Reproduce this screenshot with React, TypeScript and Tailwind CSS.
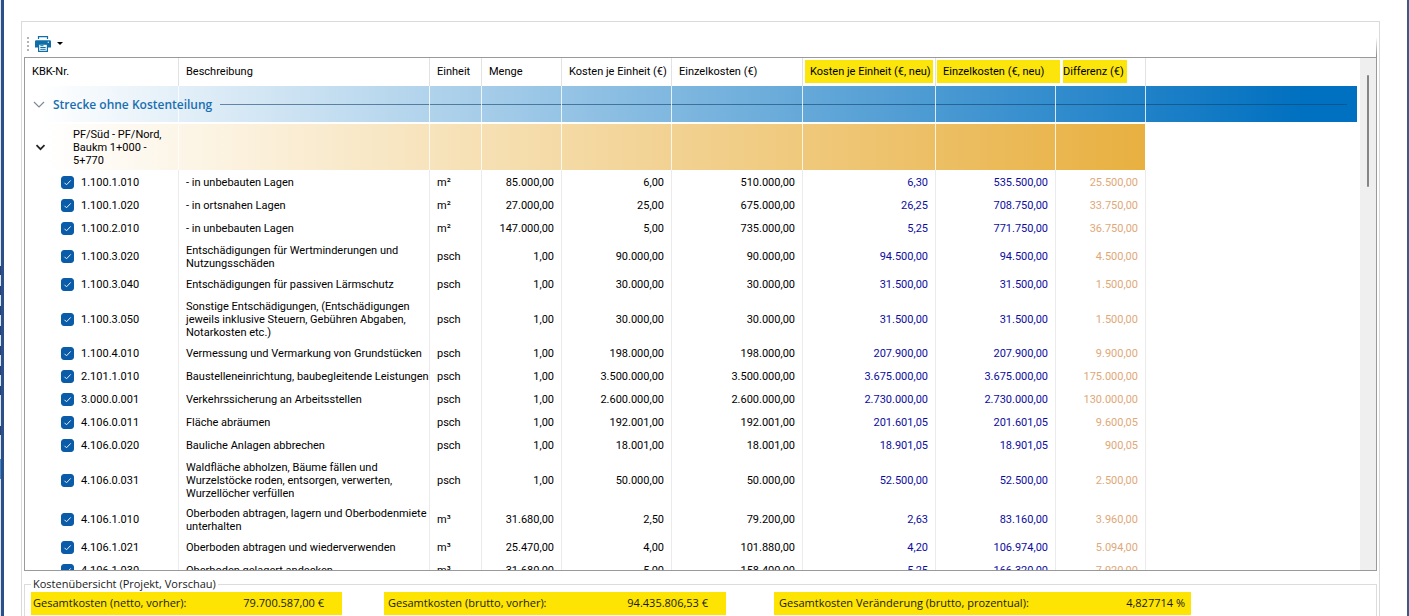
import React from 'react';

type Row = {
  nr: string;
  text: string;
  unit: string;
  amount: string;
  price: string;
  total: string;
  newPrice: string;
  newTotal: string;
  diff: string;
};

const rows: Row[] = [
  { nr: '1.100.1.010', text: '- in unbebauten Lagen', unit: 'm²', amount: '85.000,00', price: '6,00', total: '510.000,00', newPrice: '6,30', newTotal: '535.500,00', diff: '25.500,00' },
  { nr: '1.100.1.020', text: '- in ortsnahen Lagen', unit: 'm²', amount: '27.000,00', price: '25,00', total: '675.000,00', newPrice: '26,25', newTotal: '708.750,00', diff: '33.750,00' },
  { nr: '1.100.2.010', text: '- in unbebauten Lagen', unit: 'm²', amount: '147.000,00', price: '5,00', total: '735.000,00', newPrice: '5,25', newTotal: '771.750,00', diff: '36.750,00' },
  { nr: '1.100.3.020', text: 'Entschädigungen für Wertminderungen und\nNutzungsschäden', unit: 'psch', amount: '1,00', price: '90.000,00', total: '90.000,00', newPrice: '94.500,00', newTotal: '94.500,00', diff: '4.500,00' },
  { nr: '1.100.3.040', text: 'Entschädigungen für passiven Lärmschutz', unit: 'psch', amount: '1,00', price: '30.000,00', total: '30.000,00', newPrice: '31.500,00', newTotal: '31.500,00', diff: '1.500,00' },
  { nr: '1.100.3.050', text: 'Sonstige Entschädigungen, (Entschädigungen\njeweils inklusive Steuern, Gebühren Abgaben,\nNotarkosten etc.)', unit: 'psch', amount: '1,00', price: '30.000,00', total: '30.000,00', newPrice: '31.500,00', newTotal: '31.500,00', diff: '1.500,00' },
  { nr: '1.100.4.010', text: 'Vermessung und Vermarkung von Grundstücken', unit: 'psch', amount: '1,00', price: '198.000,00', total: '198.000,00', newPrice: '207.900,00', newTotal: '207.900,00', diff: '9.900,00' },
  { nr: '2.101.1.010', text: 'Baustelleneinrichtung, baubegleitende Leistungen', unit: 'psch', amount: '1,00', price: '3.500.000,00', total: '3.500.000,00', newPrice: '3.675.000,00', newTotal: '3.675.000,00', diff: '175.000,00' },
  { nr: '3.000.0.001', text: 'Verkehrssicherung an Arbeitsstellen', unit: 'psch', amount: '1,00', price: '2.600.000,00', total: '2.600.000,00', newPrice: '2.730.000,00', newTotal: '2.730.000,00', diff: '130.000,00' },
  { nr: '4.106.0.011', text: 'Fläche abräumen', unit: 'psch', amount: '1,00', price: '192.001,00', total: '192.001,00', newPrice: '201.601,05', newTotal: '201.601,05', diff: '9.600,05' },
  { nr: '4.106.0.020', text: 'Bauliche Anlagen abbrechen', unit: 'psch', amount: '1,00', price: '18.001,00', total: '18.001,00', newPrice: '18.901,05', newTotal: '18.901,05', diff: '900,05' },
  { nr: '4.106.0.031', text: 'Waldfläche abholzen, Bäume fällen und\nWurzelstöcke roden, entsorgen, verwerten,\nWurzellöcher verfüllen', unit: 'psch', amount: '1,00', price: '50.000,00', total: '50.000,00', newPrice: '52.500,00', newTotal: '52.500,00', diff: '2.500,00' },
  { nr: '4.106.1.010', text: 'Oberboden abtragen, lagern und Oberbodenmiete\nunterhalten', unit: 'm³', amount: '31.680,00', price: '2,50', total: '79.200,00', newPrice: '2,63', newTotal: '83.160,00', diff: '3.960,00' },
  { nr: '4.106.1.021', text: 'Oberboden abtragen und wiederverwenden', unit: 'm³', amount: '25.470,00', price: '4,00', total: '101.880,00', newPrice: '4,20', newTotal: '106.974,00', diff: '5.094,00' },
  { nr: '4.106.1.030', text: 'Oberboden gelagert andecken', unit: 'm³', amount: '31.680,00', price: '5,00', total: '158.400,00', newPrice: '5,25', newTotal: '166.320,00', diff: '7.920,00' },
];

const rowHeights = ['h-[23px]', 'h-[33px]', 'h-[46px]'];
const cell = 'border-r border-[#ebebeb] px-[7px] pt-[2px] pb-0';
const head = 'border-r border-[#e2e2e2] px-[7px] pt-0 pb-[2px] text-left font-normal whitespace-nowrap';

function PrinterIcon() {
  return (
    <svg viewBox="0 0 16 16" className="size-4" aria-hidden="true">
      <path d="M3.500 3V.6h9V3" fill="none" stroke="#0f6ea8" strokeWidth="1.200" />
      <path d="M1.200 4.200h13.600a1.200 1.200 0 0 1 1.200 1.200V11.500H0V5.400a1.200 1.200 0 0 1 1.200-1.200z" fill="#0f6ea8" />
      <path d="M3.600 8.200h8.800v7.200H3.600z" fill="#fff" stroke="#0f6ea8" strokeWidth="1.200" />
      <path d="M5.300 9.700h3.200M5.300 11.500h5.400M5.300 13.300h5.400" stroke="#0f6ea8" strokeWidth="1" />
      <path d="M12.700 5.800h1.300v1h-1.300z" fill="#fff" />
    </svg>
  );
}

function Toolbar() {
  return (
    <div className="flex h-[35px] items-center pl-[3px]">
      <div className="flex flex-col gap-[2px] pt-2">
        <span className="size-[2px] bg-[#b4b4b4]" />
        <span className="size-[2px] bg-[#b4b4b4]" />
        <span className="size-[2px] bg-[#b4b4b4]" />
        <span className="size-[2px] bg-[#b4b4b4]" />
      </div>
      <button type="button" aria-label="Drucken" className="flex items-center gap-[6px] pt-2 pl-[6px]">
        <PrinterIcon />
        <svg viewBox="0 0 6 3" className="h-[3px] w-[6px]" aria-hidden="true">
          <path d="M0 0h6L3 3z" fill="#000" />
        </svg>
      </button>
      <span className="ml-auto h-5 w-px self-end bg-linear-to-b from-white to-[#8a8a8a]" />
    </div>
  );
}

function CheckCell({ nr }: { nr: string }) {
  return (
    <label className="flex items-center gap-[7px] pl-[29px]">
      <span className="relative flex">
        <input type="checkbox" defaultChecked className="peer size-[13px] appearance-none rounded-[3px] border border-[#0a5ca8] bg-white checked:bg-[#0a5ca8]" />
        <svg viewBox="0 0 13 13" className="pointer-events-none absolute inset-0 hidden size-[13px] peer-checked:block" aria-hidden="true">
          <path d="M3.500 6.800l2 2 4.200-4.400" fill="none" stroke="#e6f1fa" strokeWidth="1" />
        </svg>
      </span>
      {nr}
    </label>
  );
}

function CostTable() {
  return (
    <table className="w-full table-fixed border-separate border-spacing-0 text-[11px] leading-[13px] text-black">
      <colgroup>
        <col className="w-[154px]" />
        <col className="w-[251px]" />
        <col className="w-[52px]" />
        <col className="w-[80px]" />
        <col className="w-[110px]" />
        <col className="w-[131px]" />
        <col className="w-[133px]" />
        <col className="w-[120px]" />
        <col className="w-[90px]" />
        <col />
      </colgroup>
      <thead>
        <tr className="h-7">
          <th className={head}>KBK-Nr.</th>
          <th className={head}>Beschreibung</th>
          <th className={head}>Einheit</th>
          <th className={head}>Menge</th>
          <th className={head}>Kosten je Einheit (€)</th>
          <th className={head}>Einzelkosten (€)</th>
          <th className="border-r border-[#e2e2e2] p-0 pr-[2px] pb-[2px] pl-[2px] text-left font-normal whitespace-nowrap">
            <span className="flex h-[23px] items-center bg-[#fbe50b] pl-[5px]">Kosten je Einheit (€, neu)</span>
          </th>
          <th className="p-0 pb-[2px] pl-px text-left font-normal whitespace-nowrap">
            <span className="mr-[-4px] flex h-[23px] items-center bg-[#fbe50b] pl-[6px]">Einzelkosten (€, neu)</span>
          </th>
          <th className="border-r border-[#e2e2e2] p-0 pr-[18px] pb-[2px] pl-[7px] text-left font-normal whitespace-nowrap">
            <span className="flex h-[23px] items-center bg-[#fbe50b]">Differenz (€)</span>
          </th>
          <th className="p-0" />
        </tr>
      </thead>
      <tbody>
        <tr>
          <td colSpan={10} className="p-0 pb-[2px]">
            <div className="relative flex h-9 items-center bg-[linear-gradient(to_right,#fff_15px,#0070c0_96%)] pr-[10px] pl-2">
              <div className="pointer-events-none absolute inset-0 grid grid-cols-[154px_251px_52px_80px_110px_131px_133px_120px_90px]">
                {rows.slice(0, 9).map((r) => (
                  <span key={r.nr} className="border-r border-white/80" />
                ))}
              </div>
              <button type="button" aria-expanded="true" className="relative flex items-center gap-[8px] font-['Open_Sans',sans-serif] text-[12px] font-semibold text-[#1a6fb0]">
                <svg viewBox="0 0 12 7" className="h-[7px] w-3" aria-hidden="true">
                  <path d="M1 1l5 5 5-5" fill="none" stroke="#7d8b98" strokeWidth="1.200" />
                </svg>
                Strecke ohne Kostenteilung
              </button>
              <span className="ml-2 h-px flex-1 bg-[#14426e]/60" />
            </div>
          </td>
        </tr>
        <tr className="h-[46px] bg-[linear-gradient(to_right,#fff_20px,#e8b040_1121px)]">
          <td className="border-r border-white/80 py-0 pr-0 pl-[10px]">
            <button type="button" aria-expanded="true" className="flex items-center gap-[27px] text-left whitespace-pre">
              <svg viewBox="0 0 11 7" className="h-[7px] w-[11px]" aria-hidden="true">
                <path d="M1.500 1.200l4 4 4-4" fill="none" stroke="#222" strokeWidth="1.700" />
              </svg>
              {'PF/Süd - PF/Nord,\nBaukm 1+000 -\n5+770'}
            </button>
          </td>
          <td className="border-r border-white/80" />
          <td className="border-r border-white/80" />
          <td className="border-r border-white/80" />
          <td className="border-r border-white/80" />
          <td className="border-r border-white/80" />
          <td className="border-r border-white/80" />
          <td className="border-r border-white/80" />
          <td className="border-r border-white" />
          <td className="bg-white" />
        </tr>
        {rows.map((r) => (
          <tr key={r.nr} className={rowHeights[r.text.split('\n').length - 1]}>
            <td className={cell}><CheckCell nr={r.nr} /></td>
            <td className={`${cell} whitespace-pre`}>{r.text}</td>
            <td className={cell}>{r.unit}</td>
            <td className={`${cell} text-right`}>{r.amount}</td>
            <td className={`${cell} text-right`}>{r.price}</td>
            <td className={`${cell} text-right`}>{r.total}</td>
            <td className={`${cell} text-right text-[#0c0ca0]`}>{r.newPrice}</td>
            <td className={`${cell} text-right text-[#0c0ca0]`}>{r.newTotal}</td>
            <td className={`${cell} text-right text-[#dfa878]`}>{r.diff}</td>
            <td />
          </tr>
        ))}
      </tbody>
    </table>
  );
}

function Summary() {
  const item = 'flex h-[23px] items-center justify-between bg-[#fde403] pb-[2px]';
  return (
    <fieldset className="mr-[2px] ml-[2px] min-w-0 shrink-0 border border-[#dcdcdc] pb-4 font-['Open_Sans',sans-serif] text-[11px] leading-[14px] text-[#1a1a1a]">
      <legend className="ml-[6px] px-[2px]">Kostenübersicht (Projekt, Vorschau)</legend>
      <dl className="flex items-start pt-px pl-[6px]">
        <div className={`${item} mr-[42px] w-[311px] pr-[18px] pl-[2px]`}>
          <dt>Gesamtkosten (netto, vorher):</dt>
          <dd>79.700.587,00 €</dd>
        </div>
        <div className={`${item} mr-12 w-[342px] pr-[18px] pl-1`}>
          <dt>Gesamtkosten (brutto, vorher):</dt>
          <dd>94.435.806,53 €</dd>
        </div>
        <div className={`${item} w-[417px] pr-[6px] pl-[5px]`}>
          <dt>Gesamtkosten Veränderung (brutto, prozentual):</dt>
          <dd>4,827714 %</dd>
        </div>
      </dl>
    </fieldset>
  );
}

export default function App() {
  return (
    <div className="flex h-screen overflow-hidden bg-white font-[Roboto,sans-serif]">
      <div className="flex w-px flex-col bg-[#dbe6f2] pt-[266px]">
        <div className="h-[130px] bg-[repeating-linear-gradient(to_bottom,#26407c_0_9px,#dbe6f2_9px_20px)]" />
        <div className="mt-[30px] h-[9px] bg-[#26407c]" />
        <div className="mt-6 h-5 bg-[#3f87c8]" />
      </div>
      <div className="w-[3px] bg-[#2c4f88]" />
      <main className="flex min-w-0 flex-1 pt-[21px] pr-[27px] pl-[17px]">
        <div className="flex min-w-0 flex-1 flex-col border border-b-0 border-[#dadada]">
          <div className="pr-[2px] pl-[2px]">
            <Toolbar />
          </div>
          <section className="mx-[2px] flex min-h-0 flex-1 border border-[#9a9a9a]">
            <div className="min-w-0 flex-1 overflow-y-auto pr-[3px] [scrollbar-width:none]">
              <CostTable />
            </div>
            <div className="flex w-4 justify-center bg-[#efefef] pt-[17px]">
              <div className="h-28 w-[2px] rounded-full bg-[#858585]" />
            </div>
          </section>
          <div className="mt-[6px] mb-[-16px] flex flex-col">
            <Summary />
          </div>
        </div>
      </main>
      <div className="w-[2px] bg-[#3b5a8c]" />
    </div>
  );
}
